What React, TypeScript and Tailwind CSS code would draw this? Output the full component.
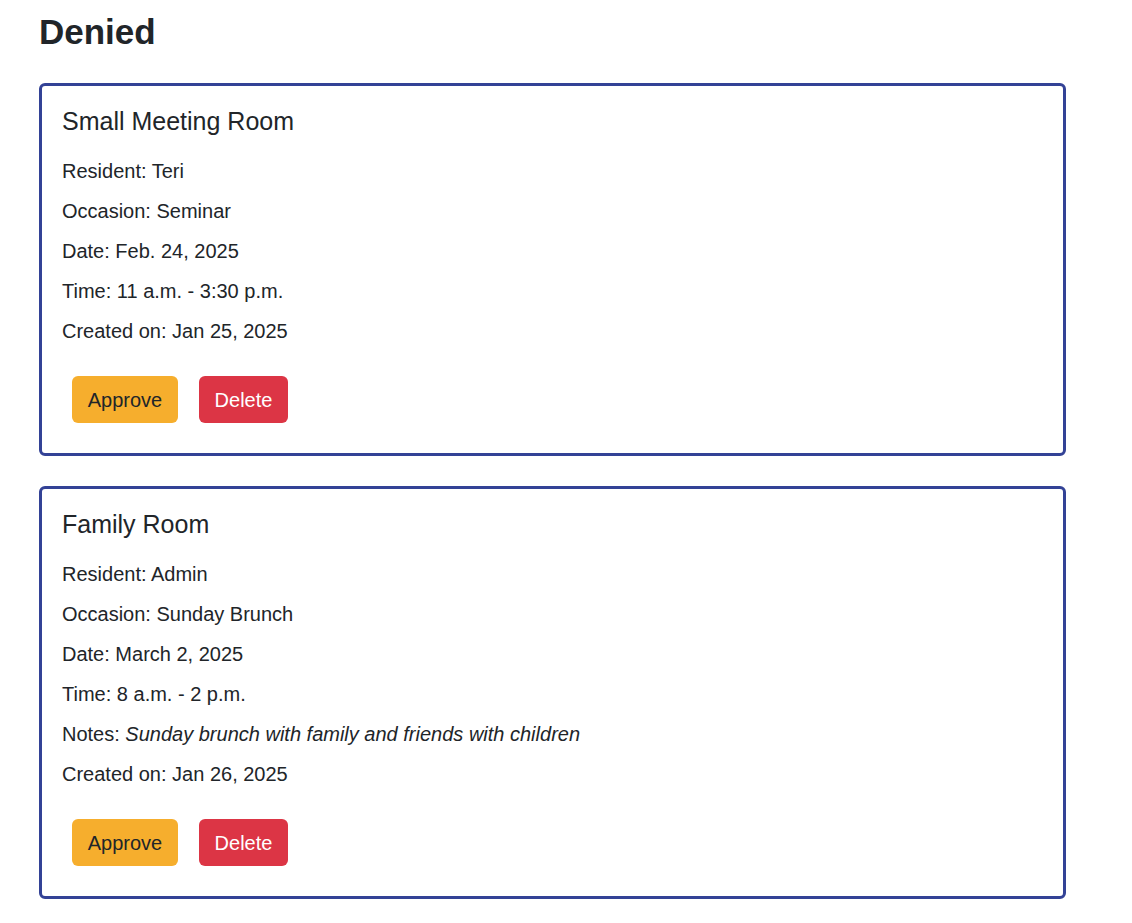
import React from "react";

type Booking = {
  room: string;
  resident: string;
  occasion: string;
  date: string;
  time: string;
  notes?: string;
  created: string;
};

const bookings: Booking[] = [
  {
    room: "Small Meeting Room",
    resident: "Teri",
    occasion: "Seminar",
    date: "Feb. 24, 2025",
    time: "11 a.m. - 3:30 p.m.",
    created: "Jan 25, 2025",
  },
  {
    room: "Family Room",
    resident: "Admin",
    occasion: "Sunday Brunch",
    date: "March 2, 2025",
    time: "8 a.m. - 2 p.m.",
    notes: "Sunday brunch with family and friends with children",
    created: "Jan 26, 2025",
  },
];

function Line({ children }: { children: React.ReactNode }) {
  return <div className="h-[40px] leading-[40px] text-[20px]">{children}</div>;
}

function Card({ b }: { b: Booking }) {
  return (
    <div className="w-[1027px] border-[3px] border-[#334296] rounded-[6px] px-[20px] pt-[20px] pb-[30px]">
      <div className="h-[30px] leading-[30px] text-[25px]">{b.room}</div>
      <div className="mt-[15px]">
        <Line>Resident: {b.resident}</Line>
        <Line>Occasion: {b.occasion}</Line>
        <Line>Date: {b.date}</Line>
        <Line>Time: {b.time}</Line>
        {b.notes && (
          <Line>
            Notes: <em className="italic">{b.notes}</em>
          </Line>
        )}
        <Line>Created on: {b.created}</Line>
      </div>
      <div className="mt-[25px] ml-[10px] flex gap-[21px]">
        <button className="h-[47px] w-[106px] rounded-[6px] bg-[#f6ae2d] text-[#212529] text-[20px]">
          Approve
        </button>
        <button className="h-[47px] w-[89px] rounded-[6px] bg-[#dc3545] text-white text-[20px]">
          Delete
        </button>
      </div>
    </div>
  );
}

export default function App() {
  return (
    <div
      className="min-h-screen bg-white text-[#212529] pl-[39px] pt-[11px]"
      style={{ fontFamily: '"Liberation Sans", Arial, sans-serif' }}
    >
      <h1 className="h-[42px] leading-[42px] text-[35px] font-bold mb-[30px]">Denied</h1>
      <div className="flex flex-col gap-[30px]">
        {bookings.map((b) => (
          <Card key={b.room} b={b} />
        ))}
      </div>
    </div>
  );
}
